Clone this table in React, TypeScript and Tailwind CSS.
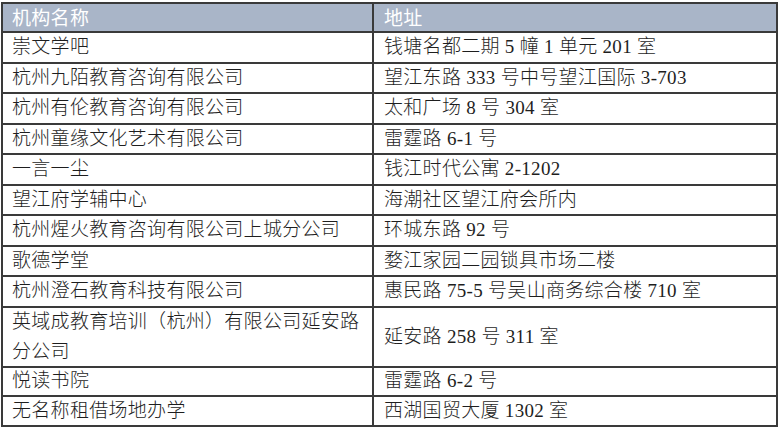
import React from "react";

type Row = { name: React.ReactNode; addr: string; h: string };

const rows: Row[] = [
  { name: "崇文学吧", addr: "钱塘名都二期 5 幢 1 单元 201 室", h: "h-[31px]" },
  { name: "杭州九陌教育咨询有限公司", addr: "望江东路 333 号中号望江国际 3-703", h: "h-[30px]" },
  { name: "杭州有伦教育咨询有限公司", addr: "太和广场 8 号 304 室", h: "h-[31px]" },
  { name: "杭州童缘文化艺术有限公司", addr: "雷霆路 6-1 号", h: "h-[30px]" },
  { name: "一言一尘", addr: "钱江时代公寓 2-1202", h: "h-[31px]" },
  { name: "望江府学辅中心", addr: "海潮社区望江府会所内", h: "h-[30px]" },
  { name: "杭州煋火教育咨询有限公司上城分公司", addr: "环城东路 92 号", h: "h-[31px]" },
  { name: "歌德学堂", addr: "婺江家园二园锁具市场二楼", h: "h-[30px]" },
  { name: "杭州澄石教育科技有限公司", addr: "惠民路 75-5 号吴山商务综合楼 710 室", h: "h-[31px]" },
  {
    name: (
      <span className="block leading-[30px]">
        英域成教育培训（杭州）有限公司延安路
        <br />
        分公司
      </span>
    ),
    addr: "延安路 258 号 311 室",
    h: "h-[60px]",
  },
  { name: "悦读书院", addr: "雷霆路 6-2 号", h: "h-[29px]" },
  { name: "无名称租借场地办学", addr: "西湖国贸大厦 1302 室", h: "h-[28px]" },
];

export default function App() {
  return (
    <div className="w-[780px] h-[429px] bg-white pt-[2px] pl-[1px]">
      <div className="w-[777px] border-2 border-[#3a3a3a] font-['Liberation_Serif','Noto_Sans_CJK_SC',serif] font-light text-[19px] tracking-[0.3px] text-[#1e1e1e]">
        <div className="flex h-[29px] bg-[#a9b5c8] border-b-2 border-[#3a3a3a] text-white font-normal font-['Noto_Sans_CJK_SC',sans-serif]">
          <div className="w-[371px] border-r-2 border-[#3a3a3a] pl-[9px] flex items-center whitespace-nowrap">机构名称</div>
          <div className="flex-1 pl-[10px] flex items-center whitespace-nowrap">地址</div>
        </div>
        {rows.map((r, i) => (
          <div
            key={i}
            className={`flex ${r.h} ${i < rows.length - 1 ? "border-b-2 border-[#3a3a3a]" : ""}`}
          >
            <div className="w-[371px] border-r-2 border-[#3a3a3a] pl-[9px] flex items-center whitespace-nowrap">
              {r.name}
            </div>
            <div className="flex-1 pl-[10px] flex items-center whitespace-nowrap">{r.addr}</div>
          </div>
        ))}
      </div>
    </div>
  );
}
